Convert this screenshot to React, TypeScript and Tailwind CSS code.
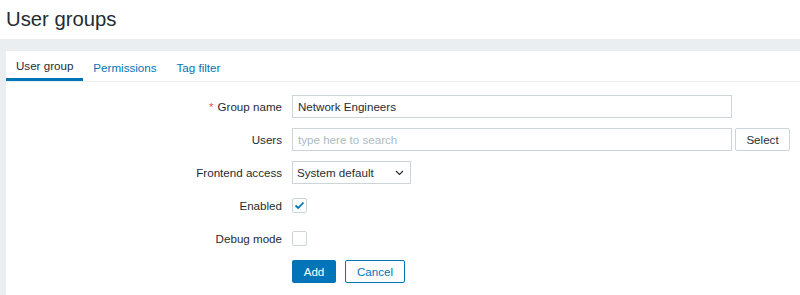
import React from "react";

const font = { fontFamily: '"Liberation Sans", Arial, sans-serif' };

const Row = ({ label, required, children }: { label: string; required?: boolean; children: React.ReactNode }) => (
  <div className="flex h-[33px] items-center">
    <div className="w-[282px] text-right text-[11.6px] text-[#1f2c33]">
      {required && <span className="mr-[4px] text-[#e45959]">*</span>}
      {label}
    </div>
    <div className="ml-[10px] flex items-center">{children}</div>
  </div>
);

const Checkbox = ({ checked }: { checked?: boolean }) => (
  <div className="flex h-[15px] w-[15px] items-center justify-center rounded-[2px] border border-[#ccd5d9] bg-white">
    {checked && (
      <svg width="11" height="9" viewBox="0 0 11 9" fill="none">
        <path d="M1.5 4.5 L4.2 7 L9.5 1.5" stroke="#0275b8" strokeWidth="1.8" />
      </svg>
    )}
  </div>
);

export default function App() {
  return (
    <div style={font} className="flex h-[295px] w-[800px] flex-col bg-[#ebeef0]">
      <div className="flex h-[39px] items-center bg-white pl-[6px]">
        <h1 className="text-[20.3px] leading-none text-[#1f2c33]">User groups</h1>
      </div>
      <div className="mt-[12px] ml-[6px] flex-1 bg-white">
        <div className="flex h-[31px] border-b border-[#ebeef0] text-[11.6px]">
          <div className="flex items-center border-b-[3px] border-[#0275b8] px-[10px] pt-[3px] text-[#1f2c33]">User group</div>
          <div className="flex items-center px-[10px] pt-[3px] text-[#0275b8]">Permissions</div>
          <div className="flex items-center px-[10px] pt-[3px] text-[#0275b8]">Tag filter</div>
        </div>
        <div className="pt-[8px]">
          <div className="-ml-[6px]">
            <Row label="Group name" required>
              <div className="flex h-[23px] w-[440px] items-center border border-[#ccd5d9] px-[5px] text-[11.6px] text-[#1f2c33]">
                Network Engineers
              </div>
            </Row>
            <Row label="Users">
              <div className="flex h-[23px] w-[440px] items-center border border-[#ccd5d9] px-[5px] text-[11.6px] text-[#acbbc2]">
                type here to search
              </div>
              <div className="ml-[3px] flex h-[23px] w-[55px] items-center justify-center rounded-[2px] border border-[#ccd5d9] text-[11.6px] text-[#1f2c33]">
                Select
              </div>
            </Row>
            <Row label="Frontend access">
              <div className="flex h-[23px] w-[119px] items-center justify-between border border-[#ccd5d9] pr-[6px] pl-[4px] text-[11.6px] text-[#1f2c33]">
                <span>System default</span>
                <svg width="9" height="6" viewBox="0 0 9 6" fill="none">
                  <path d="M1 1 L4.5 4.5 L8 1" stroke="#1f2c33" strokeWidth="1.1" />
                </svg>
              </div>
            </Row>
            <Row label="Enabled">
              <Checkbox checked />
            </Row>
            <Row label="Debug mode">
              <Checkbox />
            </Row>
            <Row label="">
              <div className="flex h-[23px] w-[44px] items-center justify-center rounded-[2px] bg-[#0275b8] text-[11.6px] text-white">
                Add
              </div>
              <div className="ml-[9px] flex h-[23px] w-[60px] items-center justify-center rounded-[2px] border border-[#0275b8] text-[11.6px] text-[#0275b8]">
                Cancel
              </div>
            </Row>
          </div>
        </div>
      </div>
    </div>
  );
}
